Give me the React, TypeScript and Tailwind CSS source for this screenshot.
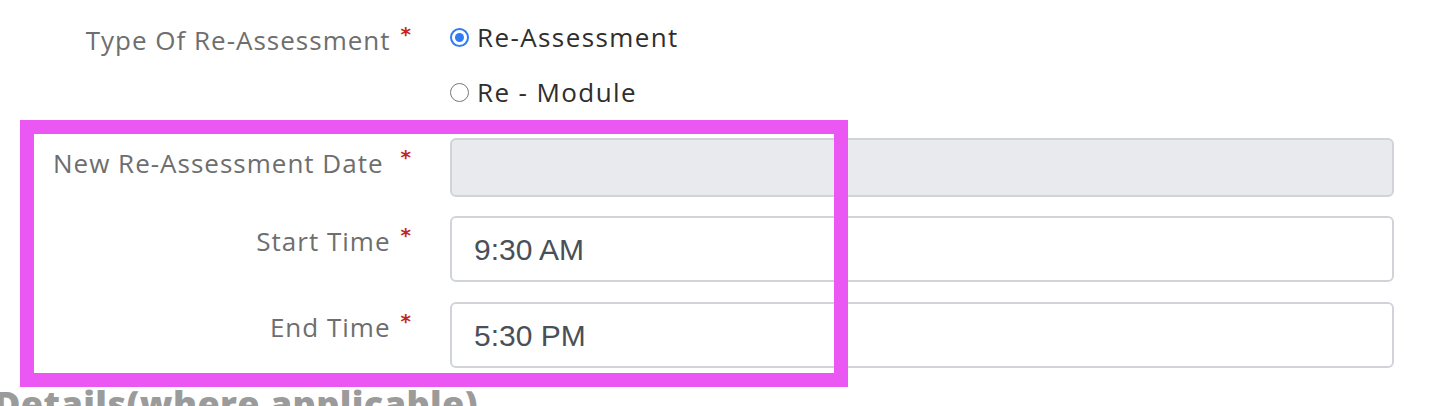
import React from "react";

const labelFont = { fontFamily: '"Open Sans", "Noto Sans", sans-serif' };

function Label({ text, extra = 0 }: { text: string; extra?: number }) {
  return (
    <div className="flex items-start justify-end pr-[39px] pt-[9px]">
      <span className="text-[26px] leading-[32px] font-medium text-[#6e6e6e] tracking-[1px]" style={{ ...labelFont, marginRight: extra }}>
        {text}
      </span>
      <span className="ml-[10px] text-[20px] leading-[20px] text-[#c4261d] font-bold" style={{ fontFamily: '"DejaVu Sans", sans-serif' }}>
        *
      </span>
    </div>
  );
}

function Radio({ checked, text }: { checked: boolean; text: string }) {
  return (
    <div className="flex h-[44px] items-center">
      {checked ? (
        <span className="flex h-[19px] w-[19px] items-center justify-center rounded-full border-2 border-[#2f7bf5] bg-white">
          <span className="h-[9px] w-[9px] rounded-full bg-[#2f7bf5]" />
        </span>
      ) : (
        <span className="h-[19px] w-[19px] rounded-full border-[1.5px] border-[#767676] bg-white" />
      )}
      <span className="ml-[8px] text-[26px] leading-[32px] font-medium text-[#2e2e2e] tracking-[1.4px]" style={labelFont}>
        {text}
      </span>
    </div>
  );
}

export default function App() {
  return (
    <div className="relative h-[406px] w-[1438px] overflow-hidden bg-white">
      <div className="grid grid-cols-[450px_944px] pt-[15px]">
        <Label text="Type Of Re-Assessment" />
        <div className="flex flex-col gap-[11px]">
          <Radio checked text="Re-Assessment" />
          <Radio checked={false} text="Re - Module" />
        </div>
      </div>

      <div className="mt-[24px] grid grid-cols-[450px_944px]">
        <Label text="New Re-Assessment Date" extra={7} />
        <div className="h-[59px] rounded-[6px] border-2 border-[#d0d4d9] bg-[#e9eaee]" />
      </div>

      <div className="mt-[19px] grid grid-cols-[450px_944px]">
        <Label text="Start Time" />
        <div className="flex h-[66px] items-center rounded-[6px] border-2 border-[#d0d4d9] bg-white pl-[22px]">
          <span className="text-[30px] text-[#495057]" style={{ fontFamily: '"Liberation Sans", Arial, sans-serif' }}>
            9:30 AM
          </span>
        </div>
      </div>

      <div className="mt-[20px] grid grid-cols-[450px_944px]">
        <Label text="End Time" />
        <div className="flex h-[66px] items-center rounded-[6px] border-2 border-[#d0d4d9] bg-white pl-[22px]">
          <span className="text-[30px] text-[#495057]" style={{ fontFamily: '"Liberation Sans", Arial, sans-serif' }}>
            5:30 PM
          </span>
        </div>
      </div>

      <div className="-ml-[6px] mt-[14px] text-[36px] font-extrabold leading-[44px] tracking-[0.4px] text-[#9b9b9b]" style={labelFont}>
        Details(where applicable)
      </div>

      <div className="pointer-events-none absolute left-[20px] top-[120px] h-[267px] w-[828px] border-[14px] border-[#ea57f2]" />
    </div>
  );
}
